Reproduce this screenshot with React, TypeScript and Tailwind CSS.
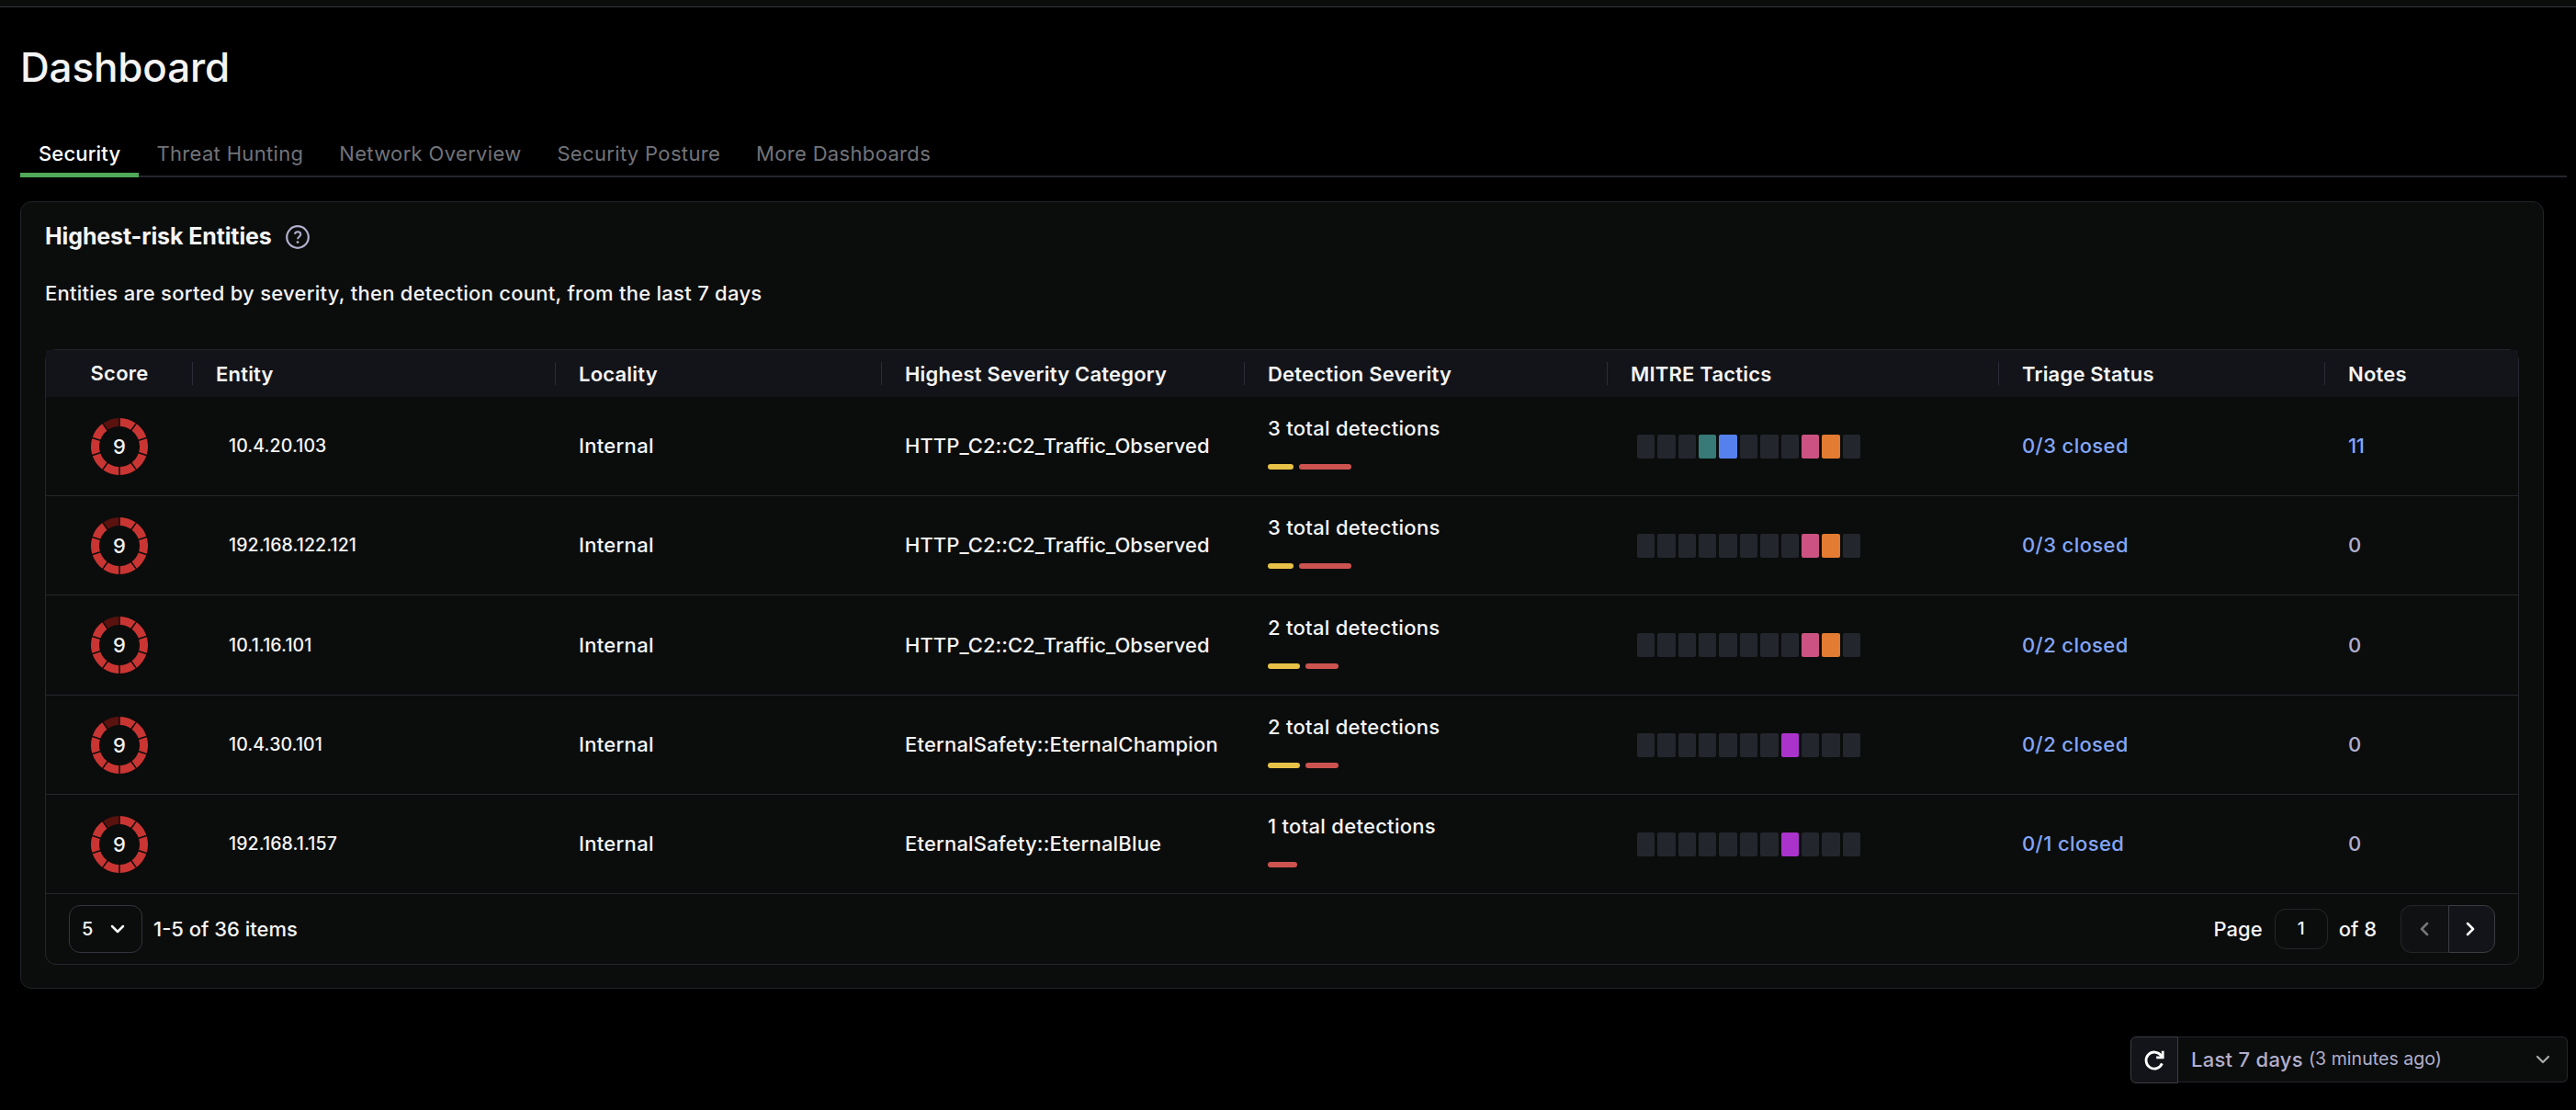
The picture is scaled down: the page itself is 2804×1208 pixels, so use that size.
import { ChevronDown, ChevronLeft, ChevronRight } from 'lucide-react';

type Row = {
  score: number;
  entity: string;
  locality: string;
  category: string;
  detections: number;
  severity: { width: number; high: boolean }[];
  tactics: Record<number, string>;
  triage: string;
  notes: number;
};

const PINK = 'bg-[#cc5381]';
const ORANGE = 'bg-[#e47b32]';
const PURPLE = 'bg-[#aa33cc]';

const tabs = ['Security', 'Threat Hunting', 'Network Overview', 'Security Posture', 'More Dashboards'];

const columns = [
  'Entity',
  'Locality',
  'Highest Severity Category',
  'Detection Severity',
  'MITRE Tactics',
  'Triage Status',
  'Notes',
];

const rows: Row[] = [
  {
    score: 9,
    entity: '10.4.20.103',
    locality: 'Internal',
    category: 'HTTP_C2::C2_Traffic_Observed',
    detections: 3,
    severity: [{ width: 28, high: false }, { width: 57, high: true }],
    tactics: { 3: 'bg-[#377a77]', 4: 'bg-[#5581ef]', 8: PINK, 9: ORANGE },
    triage: '0/3 closed',
    notes: 11,
  },
  {
    score: 9,
    entity: '192.168.122.121',
    locality: 'Internal',
    category: 'HTTP_C2::C2_Traffic_Observed',
    detections: 3,
    severity: [{ width: 28, high: false }, { width: 57, high: true }],
    tactics: { 8: PINK, 9: ORANGE },
    triage: '0/3 closed',
    notes: 0,
  },
  {
    score: 9,
    entity: '10.1.16.101',
    locality: 'Internal',
    category: 'HTTP_C2::C2_Traffic_Observed',
    detections: 2,
    severity: [{ width: 35, high: false }, { width: 36, high: true }],
    tactics: { 8: PINK, 9: ORANGE },
    triage: '0/2 closed',
    notes: 0,
  },
  {
    score: 9,
    entity: '10.4.30.101',
    locality: 'Internal',
    category: 'EternalSafety::EternalChampion',
    detections: 2,
    severity: [{ width: 35, high: false }, { width: 36, high: true }],
    tactics: { 7: PURPLE },
    triage: '0/2 closed',
    notes: 0,
  },
  {
    score: 9,
    entity: '192.168.1.157',
    locality: 'Internal',
    category: 'EternalSafety::EternalBlue',
    detections: 1,
    severity: [{ width: 32, high: true }],
    tactics: { 7: PURPLE },
    triage: '0/1 closed',
    notes: 0,
  },
];

const GRID = 'grid grid-cols-[159px_395px_355px_395px_395px_426px_355px_211px]';

function ScoreRing({ score }: { score: number }) {
  const point = (r: number, deg: number) => {
    const a = ((deg - 90) * Math.PI) / 180;
    return `${31 + r * Math.cos(a)} ${31 + r * Math.sin(a)}`;
  };
  return (
    <div className="relative h-[62px] w-[62px]">
      <svg viewBox="0 0 62 62" className="h-full w-full">
        {Array.from({ length: 10 }, (_, i) => {
          const from = i * 36;
          const to = from + 36;
          return (
            <path
              key={i}
              d={`M${point(31, from + 1.4)}A31 31 0 0 1 ${point(31, to - 1.4)}L${point(22, to - 2)}A22 22 0 0 0 ${point(22, from + 2)}Z`}
              fill={i < score ? '#c93532' : '#5a120e'}
            />
          );
        })}
      </svg>
      <span className="absolute inset-0 flex items-center justify-center pt-px text-[22px] font-medium">{score}</span>
    </div>
  );
}

function Tactics({ active }: { active: Record<number, string> }) {
  return (
    <div className="flex w-[243px] gap-[3px]">
      {Array.from({ length: 11 }, (_, i) => (
        <div key={i} className={`h-[26px] flex-1 rounded-[2px] ${active[i] ?? 'bg-[#24262e]'}`} />
      ))}
    </div>
  );
}

function EntityRow({ row }: { row: Row }) {
  return (
    <div
      className={`${GRID} h-[108px] items-center border-b border-[#24262d] text-[22px] font-[450] tracking-[0.28px] nth-[3]:h-[109px]`}
    >
      <div className="flex justify-center pl-px">
        <ScoreRing score={row.score} />
      </div>
      <div className="pt-px pl-10 text-[19.5px] font-medium tracking-[0.1px]">{row.entity}</div>
      <div className="pl-[26px]">{row.locality}</div>
      <div className={`pl-[26px] whitespace-nowrap ${row.category.includes('_') ? 'tracking-[0.04px]' : 'tracking-[0.18px]'}`}>
        {row.category}
      </div>
      <div className="flex flex-col gap-[23px] pb-[10px] pl-[26px]">
        <div className="leading-8">{row.detections} total detections</div>
        <div className="flex gap-[6px]">
          {row.severity.map((bar, i) => (
            <div
              key={i}
              className={`h-[6px] rounded-full ${bar.high ? 'bg-[#cc5350]' : 'bg-[#e8c147]'}`}
              style={{ width: bar.width }}
            />
          ))}
        </div>
      </div>
      <div className="pl-[33px]">
        <Tactics active={row.tactics} />
      </div>
      <div className="pl-[26px] tracking-[0.4px] text-[#83a6f8]">{row.triage}</div>
      <div className={`pl-[26px] ${row.notes ? 'tracking-[-0.4px] text-[#83a6f8]' : 'text-[#b1afcd]'}`}>{row.notes}</div>
    </div>
  );
}

export default function App() {
  return (
    <div className="h-[1208px] w-[2804px] overflow-hidden bg-black font-['Inter',sans-serif] text-[#f4f4f5]">
      <div className="h-2 border-b border-[#33353d] bg-[#0b0d0c]" />

      <h1 className="mt-[37px] ml-[22px] text-[44px] leading-[56px] font-[450] tracking-[-0.15px]">Dashboard</h1>

      <nav className="mt-[42px] mr-[10px] ml-[22px] flex h-[50px] border-b-2 border-[#24262d] text-[22px] leading-[49px] tracking-[0.34px]">
        {tabs.map((tab, i) => (
          <a
            key={tab}
            className={`whitespace-nowrap ${i === 0 ? 'h-[50px] w-[129px] border-b-5 border-[#4fa958] pl-5 font-[450] tracking-[0.15px] text-white' : 'px-[19.4px] text-[#727379]'}`}
          >
            {tab}
          </a>
        ))}
      </nav>

      <section className="mt-[26px] ml-[22px] h-[857px] w-[2747px] rounded-xl border border-[#212329] bg-[#0b0d0c] px-[26px]">
        <div className="flex h-[76px] items-center gap-[15px]">
          <h2 className="text-[25px] font-bold tracking-[-0.12px]">Highest-risk Entities</h2>
          <svg viewBox="0 0 26 26" className="h-[26px] w-[26px]" fill="none" stroke="#b1afcd">
            <circle cx="13" cy="13" r="11.8" strokeWidth="2.2" />
            <path d="M9.8 9.8c.5-1.8 1.7-2.6 3.3-2.6 1.8 0 3.2 1.1 3.2 2.8 0 2.4-3.2 2.6-3.2 5.2" strokeWidth="2" />
            <circle cx="13" cy="18.6" r="1.4" fill="#b1afcd" stroke="none" />
          </svg>
        </div>
        <p className="mt-[5px] text-[22px] leading-[36px] font-[450] tracking-[0.27px]">
          Entities are sorted by severity, then detection count, from the last 7 days
        </p>

        <div className="mt-[43px] rounded-xl border border-[#24262d]">
          <div className={`${GRID} h-[51px] items-center bg-[#131419] text-[22px] font-semibold tracking-[0.2px]`}>
            <div className="pl-px text-center">Score</div>
            {columns.map((col) => (
              <div key={col} className="h-[25px] border-l border-[#2b2d36] pl-[25px] leading-[26px] whitespace-nowrap">
                {col}
              </div>
            ))}
          </div>
          <div>
            {rows.map((row) => (
              <EntityRow key={row.entity} row={row} />
            ))}
          </div>
          <div className="flex h-[76px] items-center justify-between px-[25px] text-[22px] font-[450]">
            <div className="flex items-center gap-3">
              <button className="flex h-[52px] w-20 items-center justify-between rounded-xl border border-[#33343f] pr-[14px] pl-[13px] text-xl">
                5
                <ChevronDown size={24} strokeWidth={2.5} />
              </button>
              <span>1-5 of 36 items</span>
            </div>
            <div className="flex items-center">
              <span>Page</span>
              <div className="ml-[13px] flex h-11 w-[58px] items-center justify-center rounded-xl border border-[#24262d] text-[19px]">
                1
              </div>
              <span className="ml-3">of 8</span>
              <div className="ml-[26px] flex h-[52px] w-[103px]">
                <button className="flex w-[52px] items-center justify-center rounded-l-xl border border-r-0 border-[#24262b] bg-[#101113] pr-[2px] text-[#77777a]">
                  <ChevronLeft size={24} strokeWidth={2.5} />
                </button>
                <button className="flex w-[51px] items-center justify-center rounded-r-xl border border-[#3c3d42] bg-[#131419] pr-[3px] text-white">
                  <ChevronRight size={24} strokeWidth={2.5} />
                </button>
              </div>
            </div>
          </div>
        </div>
      </section>

      <div className="mt-[52px] mr-[9px] flex justify-end">
        <button className="flex h-[51px] w-[52px] items-center justify-center rounded-l-md border border-[#3c3d42] bg-[#131419]">
          <svg viewBox="0 0 24 24" className="h-6 w-6" fill="none" stroke="white" strokeWidth="2.8">
            <path d="M20.4 15.4A9 9 0 1 1 19.4 6.8L21 8.6" />
            <path d="M21.2 1.8v7h-7" />
          </svg>
        </button>
        <div className="flex h-[50px] w-[424px] items-center rounded-r-md border border-l-0 border-[#24262d] bg-[#0b0d0c] pr-[14px] pl-[14px] text-[#b1afcd]">
          <span className="text-[22px] font-[450] tracking-[0.28px]">Last 7 days</span>
          <span className="ml-[6px] text-[19.5px] tracking-[0.05px]">(3 minutes ago)</span>
          <ChevronDown size={24} strokeWidth={2.2} className="ml-auto text-[#aaaaad]" />
        </div>
      </div>
    </div>
  );
}
